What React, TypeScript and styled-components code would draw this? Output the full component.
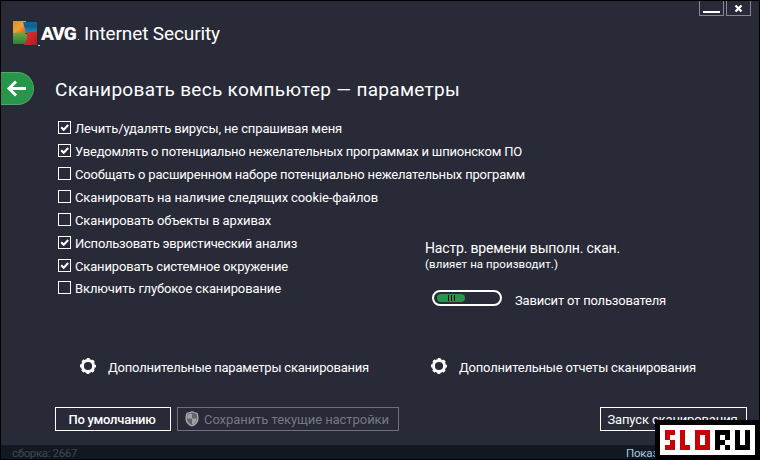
import React, { useLayoutEffect, useRef, useState } from 'react';
import styled, { createGlobalStyle } from 'styled-components';

const Global = createGlobalStyle`
  * { box-sizing: border-box; }
  body { margin: 0; background: #000; font-family: Roboto, "Liberation Sans", sans-serif; }
`;

const Window = styled.div`
  width: 760px; height: 460px; overflow: hidden;
  display: grid; grid-template-rows: 60px 56px 233px 36px 59px 14px;
  border: 1px solid #000; background: #282a38; color: #fff;
`;

const Label = styled.span<{ $size?: number; $weight?: number; $color?: string }>`
  display: inline-block; white-space: nowrap; width: max-content;
  font-size: ${p => p.$size ?? 13}px; line-height: 16px;
  font-weight: ${p => p.$weight ?? 400}; color: ${p => p.$color ?? 'inherit'};
`;

type FitProps = { children: string; width: number; size?: number; weight?: number; color?: string };

function Fit({ children, width, size, weight, color }: FitProps) {
  const ref = useRef<HTMLSpanElement>(null);
  const [spacing, setSpacing] = useState(0);
  useLayoutEffect(() => {
    const natural = ref.current!.getBoundingClientRect().width;
    setSpacing(s => s + (width - natural) / children.length);
  }, [width, children]);
  return (
    <Label ref={ref} $size={size} $weight={weight} $color={color} style={{ letterSpacing: spacing }}>
      {children}
    </Label>
  );
}

const Header = styled.header`
  display: flex; justify-content: space-between; align-items: flex-start; padding: 0 8px 0 12px;
`;
const Brand = styled.div`display: flex; align-items: center; height: 25px; margin-top: 20px;`;
const BrandName = styled.div`
  display: flex; align-items: baseline; width: 44px; padding-left: 1px; font-size: 19px; font-weight: 900;
  line-height: 24px; letter-spacing: -1px;
`;
const Dot = styled.i<{ $low?: boolean }>`
  width: ${p => (p.$low ? 2 : 1)}px; height: 1px; background: #d6d7db; flex: none;
  align-self: ${p => (p.$low ? 'flex-end' : 'baseline')}; margin-left: ${p => (p.$low ? 0 : 2)}px;
`;
const WindowButtons = styled.div`display: flex; gap: 2px;`;
const WindowButton = styled.button`
  width: 25px; height: 15px; padding: 0; border: 1px solid #858793; border-top: 0; background: transparent; display: block;
  svg { display: block; }
`;

const TitleBar = styled.div`
  display: flex; align-items: center; gap: 21px; padding-bottom: 1px;
  ${Label} { margin-top: 3px; }
`;
const BackButton = styled.button`
  width: 33px; height: 33px; padding: 0; border: 1px solid #55a56c; border-left: 0;
  border-radius: 0 17px 17px 0; background: #27964a;
  svg { display: block; }
`;

const Body = styled.main`display: grid; grid-template-columns: 367px 1fr; padding-left: 57px;`;
const Options = styled.div`display: grid; grid-template-rows: repeat(6, 23px) 22px 23px; align-content: start; padding-top: 2px;`;
const Option = styled.label`
  display: flex; align-items: center; gap: 4px; height: 17px;
  ${Label} { margin-top: 2px; }
`;
const Box = styled.span`
  width: 13px; height: 13px; border: 1px solid #fff; flex: none;
  svg { display: block; }
`;

const Timing = styled.section`
  display: flex; flex-direction: column; align-items: flex-start; padding-top: 123px;
`;
const Speed = styled.div`
  display: flex; align-items: center; gap: 13px; margin: 18px 0 0 7px; height: 20px;
  ${Label} { margin-top: 2px; }
`;
const Track = styled.div`
  width: 70px; height: 16px; margin-top: -4px; border: 2px solid #fff; border-radius: 8px; padding: 2px 3px;
`;
const Thumb = styled.div`
  display: flex; justify-content: center; align-items: center; gap: 2px; width: 28px; height: 8px; border-radius: 4px; background: #27964a;
`;
const Grip = styled.i`width: 1px; height: 6px; background: #000;`;

const Links = styled.nav`display: grid; grid-template-columns: 351px 1fr; padding: 8px 0 0 79px;`;
const Link = styled.a`
  display: flex; align-items: center; gap: 11px; height: 17px;
  ${Label} { margin-top: 2px; }
`;

const Actions = styled.div`display: flex; align-items: flex-start; padding: 21px 12px 0 54px; gap: 6px;`;
const Button = styled.button<{ $width: number; $muted?: boolean; $end?: boolean }>`
  width: ${p => p.$width}px; height: 24px; padding: 0 2px 0 0; display: flex; align-items: center; justify-content: center; gap: 5px;
  background: transparent; color: ${p => (p.$muted ? '#777882' : '#fff')};
  border: 1px solid ${p => (p.$muted ? '#70717d' : '#fff')};
  margin-left: ${p => (p.$end ? 'auto' : '0')}; font-family: inherit;
  ${Label} { margin-top: 1px; }
`;

const Footer = styled.footer`
  display: flex; justify-content: space-between; align-items: flex-start; background: #111820;
  padding: 0 11px;
`;

const Badge = styled.div`
  position: absolute; left: 655px; top: 420px; width: 105px; height: 40px; border: 5px solid #000; background: #fff;
  display: flex; gap: 5px; padding: 5px;
`;
const Mosaic = styled.div<{ $columns: number }>`
  display: grid; grid-template-columns: repeat(${p => p.$columns}, 5px); grid-auto-rows: 5px;
`;
const Tile = styled.i<{ $color: string }>`background: ${p => p.$color};`;

const mosaics: [number, string, string][] = [
  [2, '#c90006', 'xxx..xxx'],
  [2, '#c90006', 'x.x.x.xx'],
  [3, '#c90006', 'xxxx.xx.xxxx'],
  [3, '#000', 'xxxx.xxx.x.x'],
  [3, '#000', 'x.xx.xx.xxxx'],
];

const Logo = () => (
  <svg width="25" height="25" viewBox="0 0 25 25">
    <defs>
      <linearGradient id="o" x1="0" y1="0" x2="1" y2="1"><stop stopColor="#d98a26" /><stop offset=".5" stopColor="#f0a236" /><stop offset="1" stopColor="#dc5a22" /></linearGradient>
      <linearGradient id="b" x1="0" y1="0" x2="0" y2="1"><stop stopColor="#0b6a9c" /><stop offset=".35" stopColor="#0d5f90" /><stop offset="1" stopColor="#1c91c2" /></linearGradient>
      <linearGradient id="g" x1="0" y1="0" x2="0" y2="1"><stop stopColor="#7fa83c" /><stop offset="1" stopColor="#287f3b" /></linearGradient>
      <linearGradient id="r" x1="0" y1="0" x2="1" y2="1"><stop stopColor="#e23a28" /><stop offset="1" stopColor="#b01824" /></linearGradient>
    </defs>
    <path d="M0 0h13v12H0z" fill="url(#o)" />
    <path d="M0 12l10-1 5 3-2 9H0z" fill="url(#g)" />
    <path d="M10 1h14v10l-11 1z" fill="url(#b)" />
    <path d="M14 11.500l10-1V24H11l3-6z" fill="url(#r)" />
  </svg>
);

const Gear = () => (
  <svg width="17" height="17" viewBox="0 0 17 17">
    <circle cx="8" cy="8" r="5.600" fill="none" stroke="#fff" strokeWidth="3" />
    <circle cx="8" cy="8" r="7" fill="none" stroke="#fff" strokeWidth="2" strokeDasharray="2.9 2.598" strokeDashoffset="1.45" />
  </svg>
);

const Shield = () => (
  <svg width="14" height="16" viewBox="0 0 14 16">
    <path d="M7 .8C8.800 1.800 10.500 2.200 12 2.400c1.600 4.500 1.300 10-5 12.600C.7 12.400.4 6.900 2 2.400 3.500 2.200 5.200 1.800 7 .8z" fill="#62636b" stroke="#a8aaae" strokeWidth="1.300" />
    <path d="M7 2.500v5H2.200c0-1.500.2-2.800.7-4zM7 7.500h4.800c-.4 3-2 5-4.800 6.300z" fill="#a0a1a6" />
  </svg>
);

const options: [string, number, boolean][] = [
  ['Лечить/удалять вирусы, не спрашивая меня', 267, true],
  ['Уведомлять о потенциально нежелательных программах и шпионском ПО', 447, true],
  ['Сообщать о расширенном наборе потенциально нежелательных программ', 450, false],
  ['Сканировать на наличие следящих cookie-файлов', 303, false],
  ['Сканировать объекты в архивах', 196, false],
  ['Использовать эвристический анализ', 222, true],
  ['Сканировать системное окружение', 213, true],
  ['Включить глубокое сканирование', 206, false],
];

export default function App() {
  return (
    <>
      <Global />
      <Window>
        <Header>
          <Brand>
            <Logo />
            <Dot $low />
            <BrandName>AVG<Dot /></BrandName>
            <Fit width={136} size={19}>Internet Security</Fit>
          </Brand>
          <WindowButtons>
            <WindowButton aria-label="Minimize">
              <svg width="23" height="14"><path d="M3 11h17" stroke="#fff" strokeWidth="2" /></svg>
            </WindowButton>
            <WindowButton aria-label="Close">
              <svg width="23" height="14"><path d="M8.500 4.500l6 6m0-6l-6 6" stroke="#fff" strokeWidth="2.200" /></svg>
            </WindowButton>
          </WindowButtons>
        </Header>
        <TitleBar>
          <BackButton aria-label="Back">
            <svg width="32" height="31"><path d="M15 8.500l-7 7 7 7M8.500 15.500H25" fill="none" stroke="#fff" strokeWidth="3" /></svg>
          </BackButton>
          <Fit width={405} size={19}>Сканировать весь компьютер — параметры</Fit>
        </TitleBar>
        <Body>
          <Options>
            {options.map(([text, width, checked]) => (
              <Option key={text}>
                <Box>{checked && <svg width="11" height="11"><path d="M2.200 5.200l2.500 2.600 4.500-4.800" fill="none" stroke="#fff" strokeWidth="2" /></svg>}</Box>
                <Fit width={width}>{text}</Fit>
              </Option>
            ))}
          </Options>
          <Timing>
            <Fit width={195} size={14}>Настр. времени выполн. скан.</Fit>
            <Fit width={133} size={11.5}>(влияет на производит.)</Fit>
            <Speed>
              <Track><Thumb><Grip /><Grip /><Grip /></Thumb></Track>
              <Fit width={151}>Зависит от пользователя</Fit>
            </Speed>
          </Timing>
        </Body>
        <Links>
          <Link><Gear /><Fit width={261}>Дополнительные параметры сканирования</Fit></Link>
          <Link><Gear /><Fit width={237}>Дополнительные отчеты сканирования</Fit></Link>
        </Links>
        <Actions>
          <Button $width={116}><Fit width={87} weight={500}>По умолчанию</Fit></Button>
          <Button $width={222} $muted><Shield /><Fit width={185}>Сохранить текущие настройки</Fit></Button>
          <Button $width={147} $end><Fit width={130}>Запуск сканирования</Fit></Button>
        </Actions>
        <Footer>
          <Fit width={65} size={11.5} color="#424653">сборка: 2667</Fit>
          <Fit width={122} size={11.5} color="#a9c8e0">Показать уведомление</Fit>
        </Footer>
      </Window>
      <Badge>
        {mosaics.map(([columns, color, cells], i) => (
          <Mosaic key={i} $columns={columns}>
            {[...cells].map((cell, j) => <Tile key={j} $color={cell === 'x' ? color : 'transparent'} />)}
          </Mosaic>
        ))}
      </Badge>
    </>
  );
}
